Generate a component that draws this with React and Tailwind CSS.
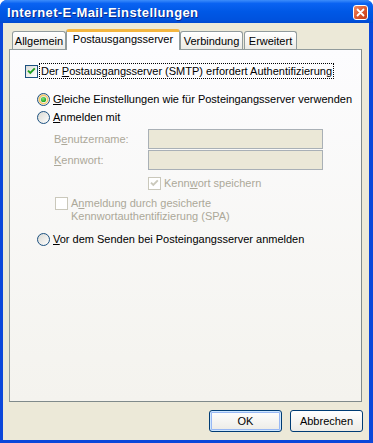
// Internet-E-Mail-Einstellungen — XP property sheet
function Check({ checked, disabled }) {
  return (
    <span className={`w-[13px] h-[13px] shrink-0 border flex items-center justify-center ${disabled ? 'border-[#cac8bb] bg-white' : 'border-[#1c5180] bg-gradient-to-br from-[#dcdcd7] to-white'}`}>
      {checked && (
        <svg width="11" height="11" viewBox="0 0 11 11">
          <path d="M2 4.6l2.3 2.4L8.8 2.4" fill="none" stroke={disabled ? '#cac8bb' : '#21a121'} strokeWidth="1.9" />
        </svg>
      )}
    </span>
  );
}

function Radio({ checked }) {
  return (
    <svg width="13" height="13" viewBox="0 0 13 13" className="shrink-0">
      <defs>
        <linearGradient id="rg" x1="0" y1="0" x2="1" y2="1">
          <stop offset="0" stopColor="#d8d8d2" />
          <stop offset="1" stopColor="#ffffff" />
        </linearGradient>
        <radialGradient id="rd" cx="0.4" cy="0.35" r="0.7">
          <stop offset="0" stopColor="#7be37b" />
          <stop offset="1" stopColor="#14a014" />
        </radialGradient>
      </defs>
      <circle cx="6.5" cy="6.5" r="6" fill="url(#rg)" stroke="#1c5180" />
      {checked && (
        <>
          <circle cx="6.5" cy="6.5" r="4.2" fill="none" stroke="#f5c868" strokeWidth="1.4" />
          <circle cx="6.5" cy="6.5" r="2.6" fill="url(#rd)" />
        </>
      )}
    </svg>
  );
}

function Tab({ label, width, active }) {
  if (active)
    return (
      <div className={`${width} h-[21px] relative z-10 rounded-t-[3px] border-x border-[#919b9c] border-t-[3px] border-t-[#f4b63f] bg-[#fcfcfe] flex justify-center pt-[1px] leading-[13px]`}>
        {label}
      </div>
    );
  return (
    <div className={`${width} h-[18px] mb-[1px] rounded-t-[3px] border border-b-0 border-[#919b9c] bg-gradient-to-b from-white to-[#ecebe6] flex justify-center pt-[3px] leading-[13px]`}>
      {label}
    </div>
  );
}

export default function App() {
  return (
    <div className="w-[373px] h-[443px] flex flex-col bg-[#0b47da] rounded-t-[7px] overflow-hidden font-['Liberation_Sans',Arial,sans-serif] text-[11px] text-black select-none">
      {/* title bar */}
      <div className="h-[23px] shrink-0 flex items-start justify-between pl-[7px] pr-[5px] bg-[linear-gradient(to_bottom,#3d8dfb_0%,#0a63f2_15%,#0058e6_50%,#0052de_85%,#0049cf_100%)]">
        <span className="mt-[6px] text-white font-bold text-[13px] leading-[14px] tracking-[0.4px] [text-shadow:1px_1px_0_#0b2a8c]">Internet-E-Mail-Einstellungen</span>
        <div className="mt-[5px] w-[15px] h-[15px] rounded-[3px] border border-white bg-gradient-to-br from-[#ef8a64] via-[#de5a30] to-[#c23a14] flex items-center justify-center">
          <svg width="9" height="9" viewBox="0 0 9 9">
            <path d="M1.5 1.5l6 6M7.5 1.5l-6 6" stroke="#fff" strokeWidth="1.8" strokeLinecap="round" />
          </svg>
        </div>
      </div>

      {/* client */}
      <div className="flex-1 flex flex-col bg-[#ece9d8] ml-[3px] mr-[4px] mb-[3px] pl-[6px] pr-[7px]">
        <div className="flex items-end h-[21px] mt-[6px] pl-[3px]">
          <Tab label="Allgemein" width="w-[54px]" />
          <Tab label="Postausgangsserver" width="w-[114px]" active />
          <Tab label="Verbindung" width="w-[63px]" />
          <div className="w-[1px]" />
          <Tab label="Erweitert" width="w-[53px]" />
        </div>

        <div className="flex-1 -mt-[1px] flex flex-col border border-[#919b9c] border-r-[#7f8a8b] border-b-[#7f8a8b] bg-gradient-to-b from-[#fcfcfe] to-[#f4f3ee] leading-[13px]">
          <div className="mt-[13px] h-[16px] flex items-center pl-[15px]">
            <Check checked />
            <span className="ml-[1px] h-[16px] px-[1px] flex items-center border border-dotted border-black">
              <span>Der <u>P</u>ostausgangsserver (SMTP) erfordert Authentifizierung</span>
            </span>
          </div>

          <div className="mt-[14px] h-[13px] flex items-center gap-[3px] pl-[27px]">
            <Radio checked />
            <span><u>G</u>leiche Einstellungen wie für Posteingangsserver verwenden</span>
          </div>
          <div className="mt-[5px] h-[13px] flex items-center gap-[3px] pl-[27px]">
            <Radio />
            <span><u>A</u>nmelden mit</span>
          </div>

          <div className="mt-[5px] flex flex-col gap-[1px] pl-[44px] text-[#aca899]">
            <div className="flex items-center h-[20px]">
              <span className="w-[94px]">B<u>e</u>nutzername:</span>
              <div className="w-[175px] h-[20px] border border-[#a9b0b6] bg-[#ebe8d7]" />
            </div>
            <div className="flex items-center h-[20px]">
              <span className="w-[94px]"><u>K</u>ennwort:</span>
              <div className="w-[175px] h-[20px] border border-[#a9b0b6] bg-[#ebe8d7]" />
            </div>
          </div>

          <div className="mt-[7px] h-[13px] flex items-center gap-[3px] pl-[138px] text-[#aca899]">
            <Check checked disabled />
            <span>Kenn<u>w</u>ort speichern</span>
          </div>

          <div className="mt-[7px] flex items-start gap-[3px] pl-[45px] text-[#aca899]">
            <Check disabled />
            <span>
              A<u>n</u>meldung durch gesicherte
              <br />
              Kennwortauthentifizierung (SPA)
            </span>
          </div>

          <div className="mt-[10px] h-[13px] flex items-center gap-[3px] pl-[27px]">
            <Radio />
            <span><u>V</u>or dem Senden bei Posteingangsserver anmelden</span>
          </div>
        </div>

        <div className="flex justify-end gap-[8px] mt-[8px] mb-[8px] -mr-[1px]">
          <button className="w-[73px] h-[22px] rounded-[3px] border border-[#003c74] bg-gradient-to-b from-white to-[#ecebe6] shadow-[inset_0_0_0_1px_#cee7ff,inset_0_0_0_2px_#98b8f4] text-[11px]">
            OK
          </button>
          <button className="w-[73px] h-[22px] rounded-[3px] border border-[#003c74] bg-gradient-to-b from-white to-[#ecebe6] text-[11px]">
            Abbrechen
          </button>
        </div>
      </div>
    </div>
  );
}
